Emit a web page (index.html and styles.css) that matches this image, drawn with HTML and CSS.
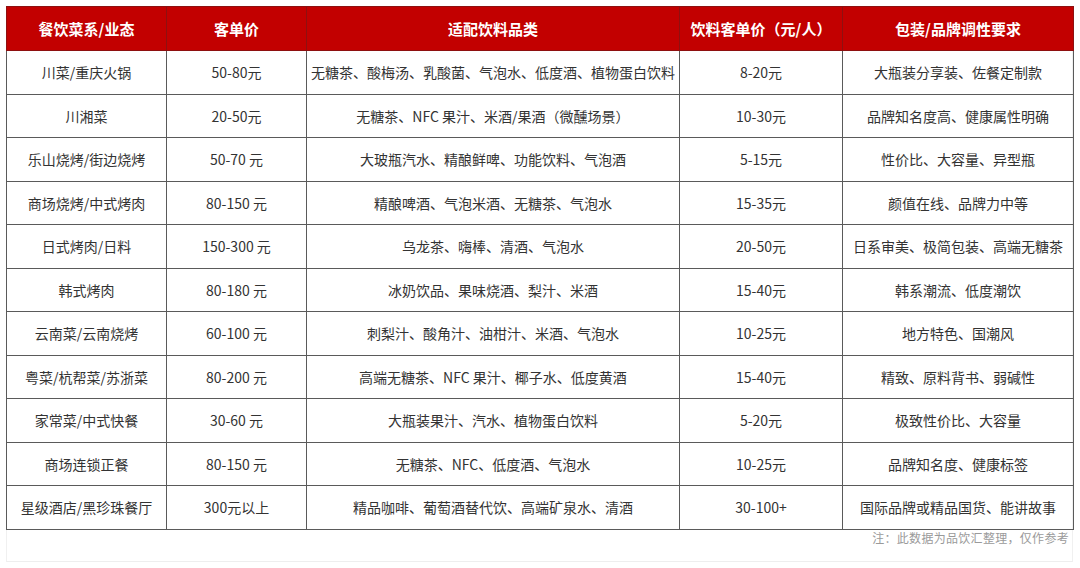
FILE: index.html
```html
<!DOCTYPE html>
<html lang="zh">
<head>
<meta charset="utf-8">
<link rel="stylesheet" href="styles.css">
</head>
<body>
<div class="panel">
  <table class="grid">
    <colgroup>
      <col class="c1"><col class="c2"><col class="c3"><col class="c4"><col class="c5">
    </colgroup>
    <thead>
      <tr>
        <th>餐饮菜系/业态</th>
        <th>客单价</th>
        <th>适配饮料品类</th>
        <th>饮料客单价（元/人）</th>
        <th>包装/品牌调性要求</th>
      </tr>
    </thead>
    <tbody>
      <tr><td>川菜/重庆火锅</td><td>50-80元</td><td>无糖茶、酸梅汤、乳酸菌、气泡水、低度酒、植物蛋白饮料</td><td>8-20元</td><td>大瓶装分享装、佐餐定制款</td></tr>
      <tr><td>川湘菜</td><td>20-50元</td><td>无糖茶、NFC 果汁、米酒/果酒（微醺场景）</td><td>10-30元</td><td>品牌知名度高、健康属性明确</td></tr>
      <tr><td>乐山烧烤/街边烧烤</td><td>50-70 元</td><td>大玻瓶汽水、精酿鲜啤、功能饮料、气泡酒</td><td>5-15元</td><td>性价比、大容量、异型瓶</td></tr>
      <tr><td>商场烧烤/中式烤肉</td><td>80-150 元</td><td>精酿啤酒、气泡米酒、无糖茶、气泡水</td><td>15-35元</td><td>颜值在线、品牌力中等</td></tr>
      <tr><td>日式烤肉/日料</td><td>150-300 元</td><td>乌龙茶、嗨棒、清酒、气泡水</td><td>20-50元</td><td>日系审美、极简包装、高端无糖茶</td></tr>
      <tr><td>韩式烤肉</td><td>80-180 元</td><td>冰奶饮品、果味烧酒、梨汁、米酒</td><td>15-40元</td><td>韩系潮流、低度潮饮</td></tr>
      <tr><td>云南菜/云南烧烤</td><td>60-100 元</td><td>刺梨汁、酸角汁、油柑汁、米酒、气泡水</td><td>10-25元</td><td>地方特色、国潮风</td></tr>
      <tr><td>粤菜/杭帮菜/苏浙菜</td><td>80-200 元</td><td>高端无糖茶、NFC 果汁、椰子水、低度黄酒</td><td>15-40元</td><td>精致、原料背书、弱碱性</td></tr>
      <tr><td>家常菜/中式快餐</td><td>30-60 元</td><td>大瓶装果汁、汽水、植物蛋白饮料</td><td>5-20元</td><td>极致性价比、大容量</td></tr>
      <tr><td>商场连锁正餐</td><td>80-150 元</td><td>无糖茶、NFC、低度酒、气泡水</td><td>10-25元</td><td>品牌知名度、健康标签</td></tr>
      <tr><td>星级酒店/黑珍珠餐厅</td><td>300元以上</td><td>精品咖啡、葡萄酒替代饮、高端矿泉水、清酒</td><td>30-100+</td><td>国际品牌或精品国货、能讲故事</td></tr>
    </tbody>
  </table>
  <p class="note">注：此数据为品饮汇整理，仅作参考</p>
</div>
</body>
</html>
```
FILE: styles.css
```css
html, body {
  margin: 0;
  padding: 0;
  background: #ffffff;
}
body {
  font-family: "Noto Sans CJK SC", "Noto Sans", sans-serif;
  color: #333333;
}
.panel {
  margin: 6px 5px 0 6px;
  width: 1067px;
  height: 556px;
  border-left: 1px solid #f0f0f0;
  border-right: 1px solid #f0f0f0;
  border-bottom: 1px solid #eeeeee;
  box-sizing: border-box;
  position: relative;
}
.grid {
  border-collapse: collapse;
  table-layout: fixed;
  width: 1067px;
  margin-left: -1px;
}
.c1 { width: 160px; }
.c2 { width: 140px; }
.c3 { width: 373px; }
.c4 { width: 163px; }
.c5 { width: 231px; }
.grid th {
  background: #c20000;
  color: #ffffff;
  font-size: 15px;
  font-weight: 700;
  height: 44px;
  padding: 0;
  border: 1px solid #8e1010;
  text-align: center;
  box-sizing: border-box;
}
.grid td {
  font-size: 14px;
  height: 43.5px;
  padding: 0;
  border: 1px solid #5a5a5a;
  text-align: center;
  box-sizing: border-box;
  white-space: nowrap;
  line-height: 20px;
}
.note {
  margin: 0;
  padding: 0 3px 0 0;
  line-height: 16px;
  text-align: right;
  font-size: 12px;
  color: #9a9a9a;
  letter-spacing: 0.3px;
}
```
